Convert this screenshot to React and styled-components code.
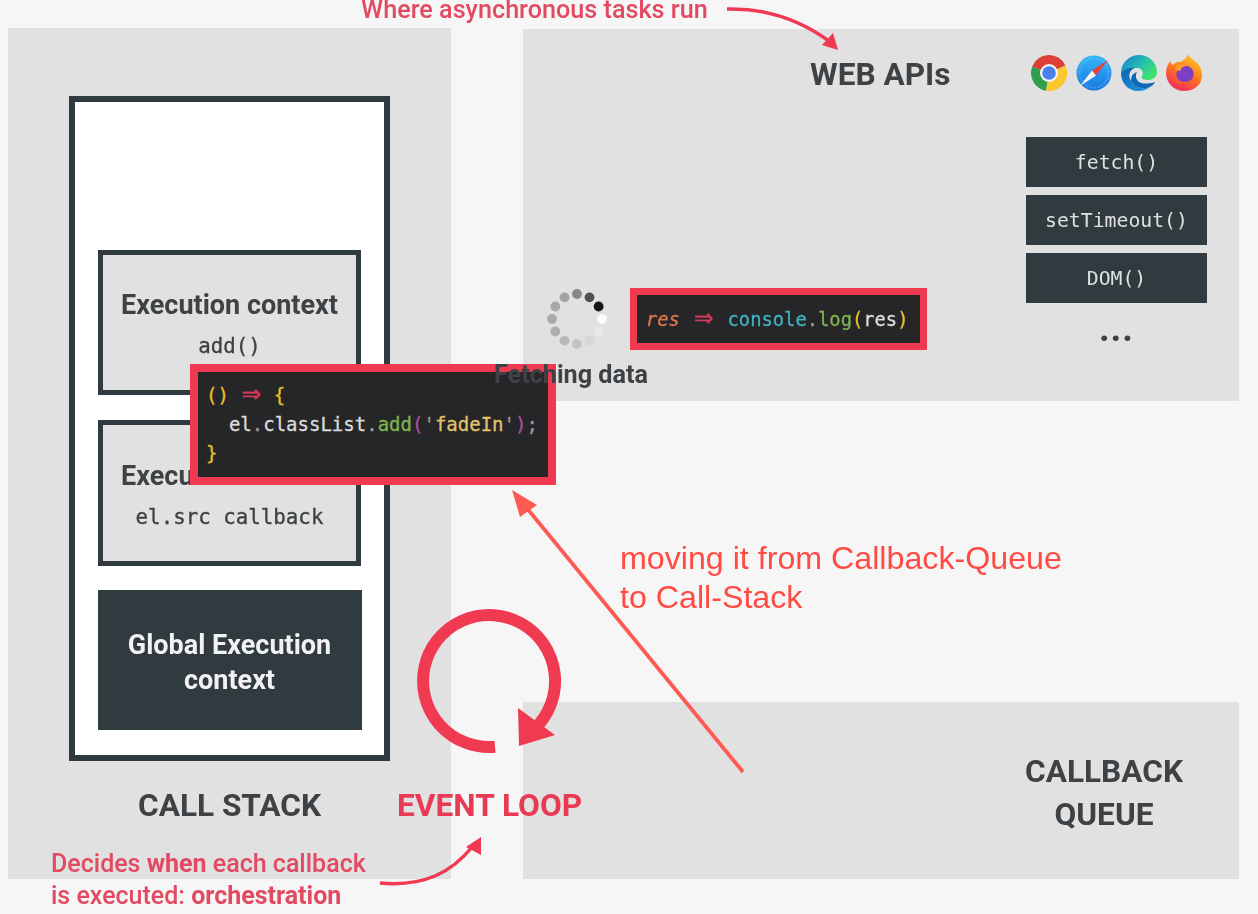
import styled, { createGlobalStyle } from "styled-components";

const RED = "#f03a52";
const DARK = "#2f3b3f";
const PANEL = "#e1e1e1";
const INK = "#3e4245";

const Global = createGlobalStyle`
    html, body {
        margin: 0;
        padding: 0;
        background: #f6f6f6;
    }
    body {
        font-family: Roboto, "Liberation Sans", sans-serif;
        overflow: hidden;
    }
`;

const Page = styled.div`
    position: relative;
    width: 1258px;
    height: 914px;
    overflow: hidden;
`;

const Diagram = styled.div`
    display: grid;
    grid-template-columns: 443px 716px;
    grid-template-rows: 372px 302px 177px;
    column-gap: 72px;
    padding: 28px 0 0 8px;
    filter: blur(0.55px);
`;

const StackPanel = styled.section`
    grid-row: 1 / 4;
    background: ${PANEL};
    display: flex;
    flex-direction: column;
    align-items: center;
    padding-top: 68px;
`;

const StackFrame = styled.div`
    box-sizing: border-box;
    width: 321px;
    height: 665px;
    border: 6px solid ${DARK};
    background: #fff;
    display: flex;
    flex-direction: column;
    justify-content: flex-end;
    align-items: center;
    gap: 25px;
    padding-bottom: 25px;
`;

const ContextBox = styled.div`
    box-sizing: border-box;
    width: 263px;
    height: ${(p) => p.$height}px;
    border: 5px solid ${DARK};
    background: ${PANEL};
    display: flex;
    flex-direction: column;
    align-items: center;
    padding-top: ${(p) => p.$top}px;
    gap: 10px;
`;

const ContextTitle = styled.div`
    font-size: 27px;
    line-height: 36px;
    font-weight: 700;
    color: ${INK};
    white-space: nowrap;
`;

const ContextCode = styled.div`
    font-family: "DejaVu Sans Mono", monospace;
    font-size: 20.8px;
    line-height: 26px;
    color: #3c4042;
    -webkit-text-stroke: 0.3px #3c4042;
`;

const GlobalBox = styled.div`
    box-sizing: border-box;
    width: 264px;
    height: 140px;
    margin-top: -1px;
    padding-top: 6px;
    background: ${DARK};
    color: #f2f2f2;
    font-size: 27px;
    line-height: 35px;
    font-weight: 700;
    text-align: center;
    display: flex;
    align-items: center;
    justify-content: center;
`;

const PanelTitle = styled.h2`
    margin: 0;
    font-size: 31.6px;
    line-height: 43px;
    font-weight: 700;
    color: ${INK};
    white-space: nowrap;
    text-align: center;
`;

const StackTitle = styled(PanelTitle)`
    margin-top: 23px;
`;

const WebPanel = styled.section`
    height: 372px;
    margin-top: 1px;
    background: ${PANEL};
    display: flex;
    padding-right: 32px;
`;

const WebLeft = styled.div`
    flex: 1;
    display: flex;
    flex-direction: column;
`;

const WebTitle = styled(PanelTitle)`
    margin: 24px 0 0 287px;
    text-align: left;
`;

const AsyncRow = styled.div`
    display: flex;
    align-items: center;
    gap: 23px;
    margin: 192px 0 0 24px;
`;

const SpinnerWrap = styled.div`
    position: relative;
    width: 60px;
    height: 60px;
`;

const FetchLabel = styled.div`
    position: absolute;
    z-index: 3;
    top: 71px;
    left: -53px;
    font-size: 25.2px;
    line-height: 30px;
    font-weight: 700;
    color: ${INK};
    white-space: nowrap;
`;

const WebRight = styled.div`
    width: 181px;
    display: flex;
    flex-direction: column;
    align-items: center;
`;

const Browsers = styled.div`
    display: flex;
    gap: 7px;
    margin: 25px 0 0 -1px;
    height: 38px;
`;

const ApiList = styled.div`
    display: flex;
    flex-direction: column;
    gap: 8px;
    margin-top: 45px;
`;

const ApiItem = styled.div`
    width: 181px;
    height: 50px;
    padding-top: 1px;
    box-sizing: border-box;
    background: ${DARK};
    color: #dfe1e1;
    font-family: "DejaVu Sans Mono", monospace;
    font-size: 19.8px;
    display: flex;
    align-items: center;
    justify-content: center;
`;

const More = styled.div`
    margin-top: 7px;
    color: ${INK};
    font-size: 37px;
    line-height: 38px;
    font-weight: 700;
    letter-spacing: 1px;
`;

const CodeBox = styled.div`
    box-sizing: border-box;
    background: #262528;
    border: ${(p) => p.$border}px solid ${RED};
    font-family: "DejaVu Sans Mono", monospace;
    color: #dcdcdc;
    white-space: pre;
    -webkit-text-stroke: 0.3px;
`;

const ResBox = styled(CodeBox)`
    width: 297px;
    height: 62px;
    font-size: 18.8px;
    line-height: 49px;
    padding-left: 9px;
`;

const CallbackBox = styled(CodeBox)`
    position: absolute;
    z-index: 2;
    left: 190px;
    top: 364px;
    width: 366px;
    height: 121px;
    font-size: 19px;
    line-height: 29px;
    padding: 9px 0 0 8px;
`;

const Tok = styled.span`
    color: ${(p) => p.$c};
    font-style: ${(p) => (p.$i ? "italic" : "normal")};
`;

const Arrow = styled.span`
    display: inline-block;
    width: ${(p) => p.$w}px;
    text-align: center;
    font-family: "DejaVu Sans", sans-serif;
    font-size: 24px;
    line-height: 1px;
    color: #d43a5c;
`;

const QueuePanel = styled.section`
    grid-column: 2;
    grid-row: 3;
    background: ${PANEL};
    display: flex;
    justify-content: flex-end;
    padding: 48px 56px 0 0;
`;

const EventLoop = styled.svg`
    position: absolute;
    left: 380px;
    top: 600px;
`;

const EventLabel = styled.div`
    position: absolute;
    left: 397px;
    top: 784px;
    font-size: 31.7px;
    line-height: 43px;
    font-weight: 700;
    color: #e93a55;
    white-space: nowrap;
`;

const Note = styled.div`
    position: absolute;
    left: ${(p) => p.$x}px;
    top: ${(p) => p.$y}px;
    font-size: ${(p) => p.$size}px;
    line-height: ${(p) => p.$lh}px;
    font-weight: 500;
    color: #e24a62;
    white-space: nowrap;
`;

const Strong = styled.span`
    font-weight: 700;
`;

const Overlay = styled.svg`
    position: absolute;
    left: 0;
    top: 0;
    pointer-events: none;
`;

const Comment = styled.div`
    position: absolute;
    left: 620px;
    top: 539px;
    font-family: "Liberation Sans", Arial, sans-serif;
    font-size: 32.2px;
    line-height: 39px;
    color: #ff4b43;
    white-space: nowrap;
`;

const Spinner = () => {
    const shades = ["#868686", "#505050", "#161616", "#fcfcfc", "#e8e8e8", "#d6d6d6", "#c4c4c4", "#b8b8b8", "#aeaeae", "#aaaaaa", "#a8a8a8", "#a2a2a2"];
    return (
        <svg width="60" height="60" viewBox="-30 -30 60 60">
            {shades.map((fill, i) => {
                const a = ((i * 30 - 90) * Math.PI) / 180;
                return <circle key={i} cx={25 * Math.cos(a)} cy={25 * Math.sin(a)} r="4.9" fill={fill} />;
            })}
        </svg>
    );
};

const wedge = (from, to, r = 18) => {
    const p = (d) => `${(r * Math.cos((d * Math.PI) / 180)).toFixed(2)} ${(r * Math.sin((d * Math.PI) / 180)).toFixed(2)}`;
    return `M0 0L${p(from)}A${r} ${r} 0 ${to - from > 180 ? 1 : 0} 1 ${p(to)}Z`;
};

const Chrome = () => (
    <svg width="38" height="38" viewBox="-19 -19 38 38">
        <path d={wedge(-160, -25)} fill="#dd4035" />
        <path d={wedge(-25, 100)} fill="#fbc72f" />
        <path d={wedge(100, 200)} fill="#2f9e4f" />
        <circle r="9" fill="#f4f4f4" />
        <circle r="6.8" fill="#4a80ec" />
    </svg>
);

const Safari = () => (
    <svg width="38" height="38" viewBox="-19 -19 38 38">
        <defs>
            <linearGradient id="sf" x1="0" y1="0" x2="0" y2="1">
                <stop offset="0" stopColor="#34b6fa" />
                <stop offset="1" stopColor="#1a77e0" />
            </linearGradient>
        </defs>
        <circle r="17.5" fill="url(#sf)" />
        <circle r="14.5" fill="none" stroke="#a9dcfb" strokeOpacity="0.45" strokeWidth="2" strokeDasharray="1 1.6" />
        <path d="M14 -13L-2 -2.5L2 2.5Z" fill="#e8413c" />
        <path d="M-14 13L-2 -2.5L2 2.5Z" fill="#f3f3f3" />
    </svg>
);

const Edge = () => (
    <svg width="38" height="38" viewBox="-19 -19 38 38">
        <defs>
            <linearGradient id="eg" x1="0.95" y1="0.6" x2="0.2" y2="0.1">
                <stop offset="0" stopColor="#3fe06e" />
                <stop offset="0.5" stopColor="#25c0b0" />
                <stop offset="1" stopColor="#1c8fca" />
            </linearGradient>
            <linearGradient id="eb" x1="0" y1="0" x2="0.7" y2="1">
                <stop offset="0" stopColor="#0d63ad" />
                <stop offset="1" stopColor="#1a8fdb" />
            </linearGradient>
        </defs>
        <path d="M-18 0C-18 -11 -9 -18 0 -18C11 -18 18 -10 18 -1C18 4 14 7 9 7C5 7 2 6 3 3C5 1 4 -5 -2 -5C-9 -5 -15 -3 -18 0Z" fill="url(#eg)" />
        <path d="M-18 0C-15 -4 -9 -6 -4 -5C-10 -3 -11 3 -8 8C-5 14 3 17 11 14C7 17 3 18 -1 18C-11 18 -18 10 -18 0Z" fill="url(#eb)" />
        <path d="M-8 8C-5 14 3 17 11 14C13 13 15 11 16 9C13 10 5 12 0 9C-3 7 -4 2 -2 -1C-6 0 -8 3 -8 8Z" fill="#1069b5" />
    </svg>
);

const Firefox = () => (
    <svg width="38" height="38" viewBox="-19 -19 38 38">
        <defs>
            <linearGradient id="ff" x1="0.8" y1="0" x2="0.3" y2="1">
                <stop offset="0" stopColor="#ffd02b" />
                <stop offset="0.5" stopColor="#ff7a1f" />
                <stop offset="1" stopColor="#f0285f" />
            </linearGradient>
        </defs>
        <path d="M3 -19C6 -15 11 -13 15 -8C18 -3 19 2 17 8C14 15 7 18 0 18C-10 18 -18 10 -18 0C-18 -5 -16 -9 -14 -12C-13 -10 -12 -9 -11 -8C-9 -11 -5 -12 -3 -11C-1 -13 3 -14 3 -19Z" fill="url(#ff)" />
        <circle cx="1" cy="1" r="8.6" fill="#7a3fc4" />
        <path d="M-9 -5C-5 -9 0 -9 4 -7C-1 -7 -3 -5 -3 -3C-5 -1 -8 -2 -9 -5Z" fill="#ff9a2a" />
        <path d="M-11 3C-7 9 3 12 10 5C8 13 -9 14 -11 3Z" fill="#ff5a2a" />
    </svg>
);

const App = () => {
    return (
        <Page>
            <Global />
            <Diagram>
                <StackPanel>
                    <StackFrame>
                        <ContextBox $height={145} $top={32}>
                            <ContextTitle>Execution context</ContextTitle>
                            <ContextCode>add()</ContextCode>
                        </ContextBox>
                        <ContextBox $height={146} $top={33}>
                            <ContextTitle>Execution context</ContextTitle>
                            <ContextCode>el.src callback</ContextCode>
                        </ContextBox>
                        <GlobalBox>
                            Global Execution
                            <br />
                            context
                        </GlobalBox>
                    </StackFrame>
                    <StackTitle>CALL STACK</StackTitle>
                </StackPanel>
                <WebPanel>
                    <WebLeft>
                        <WebTitle>WEB APIs</WebTitle>
                        <AsyncRow>
                            <SpinnerWrap>
                                <Spinner />
                                <FetchLabel>Fetching data</FetchLabel>
                            </SpinnerWrap>
                            <ResBox $border={7}>
                                <Tok $c="#d9764a" $i>res</Tok> <Arrow $w={25}>⇒</Arrow> <Tok $c="#3fb3bd">console</Tok>
                                <Tok $c="#9a9a9a">.</Tok>
                                <Tok $c="#7fb550">log</Tok>
                                <Tok $c="#e6c229">(</Tok>res<Tok $c="#e6c229">)</Tok>
                            </ResBox>
                        </AsyncRow>
                    </WebLeft>
                    <WebRight>
                        <Browsers>
                            <Chrome />
                            <Safari />
                            <Edge />
                            <Firefox />
                        </Browsers>
                        <ApiList>
                            <ApiItem>fetch()</ApiItem>
                            <ApiItem>setTimeout()</ApiItem>
                            <ApiItem>DOM()</ApiItem>
                        </ApiList>
                        <More>...</More>
                    </WebRight>
                </WebPanel>
                <QueuePanel>
                    <PanelTitle>
                        CALLBACK
                        <br />
                        QUEUE
                    </PanelTitle>
                </QueuePanel>
                <CallbackBox $border={8}>
                    <Tok $c="#e6c229">()</Tok> <Arrow $w={22}>⇒</Arrow> <Tok $c="#e6c229">{"{"}</Tok>
                    {"\n  "}el<Tok $c="#9a9a9a">.</Tok>classList<Tok $c="#9a9a9a">.</Tok>
                    <Tok $c="#7fb550">add</Tok>
                    <Tok $c="#b04fa0">(</Tok>
                    <Tok $c="#9a9a9a">'</Tok>
                    <Tok $c="#e3c26a">fadeIn</Tok>
                    <Tok $c="#9a9a9a">'</Tok>
                    <Tok $c="#b04fa0">)</Tok>
                    <Tok $c="#9a9a9a">;</Tok>
                    {"\n"}
                    <Tok $c="#e6c229">{"}"}</Tok>
                </CallbackBox>
                <EventLoop width="200" height="170" viewBox="380 600 200 170">
                    <path d="M495 746.7A66 66 0 1 1 534 729.3" fill="none" stroke={RED} strokeWidth="12" />
                    <path d="M518 708L555 735L519 746Z" fill={RED} />
                </EventLoop>
                <EventLabel>EVENT LOOP</EventLabel>
                <Note $x={361} $y={-4} $size={25.2} $lh={28}>Where asynchronous tasks run</Note>
                <Note $x={51} $y={848} $size={25} $lh={32}>
                    Decides <Strong>when</Strong> each callback
                    <br />
                    is executed: <Strong>orchestration</Strong>
                </Note>
                <Overlay width="1258" height="914" viewBox="0 0 1258 914">
                    <path d="M727 9C765 8 800 20 829 41" fill="none" stroke={RED} strokeWidth="3.5" />
                    <path d="M838 50L822 45L833 33Z" fill={RED} />
                    <path d="M380 883C425 887 452 872 473 846" fill="none" stroke={RED} strokeWidth="3.5" />
                    <path d="M481 837L466 847L481 855Z" fill={RED} />
                </Overlay>
            </Diagram>
            <Overlay width="1258" height="914" viewBox="0 0 1258 914">
                <path d="M743 772L526 507" fill="none" stroke="#ff5a52" strokeWidth="3.8" />
                <path d="M512 490L520 517L537 505Z" fill="#ff5a52" />
            </Overlay>
            <Comment>
                moving it from Callback-Queue
                <br />
                to Call-Stack
            </Comment>
        </Page>
    );
};

export default App;
